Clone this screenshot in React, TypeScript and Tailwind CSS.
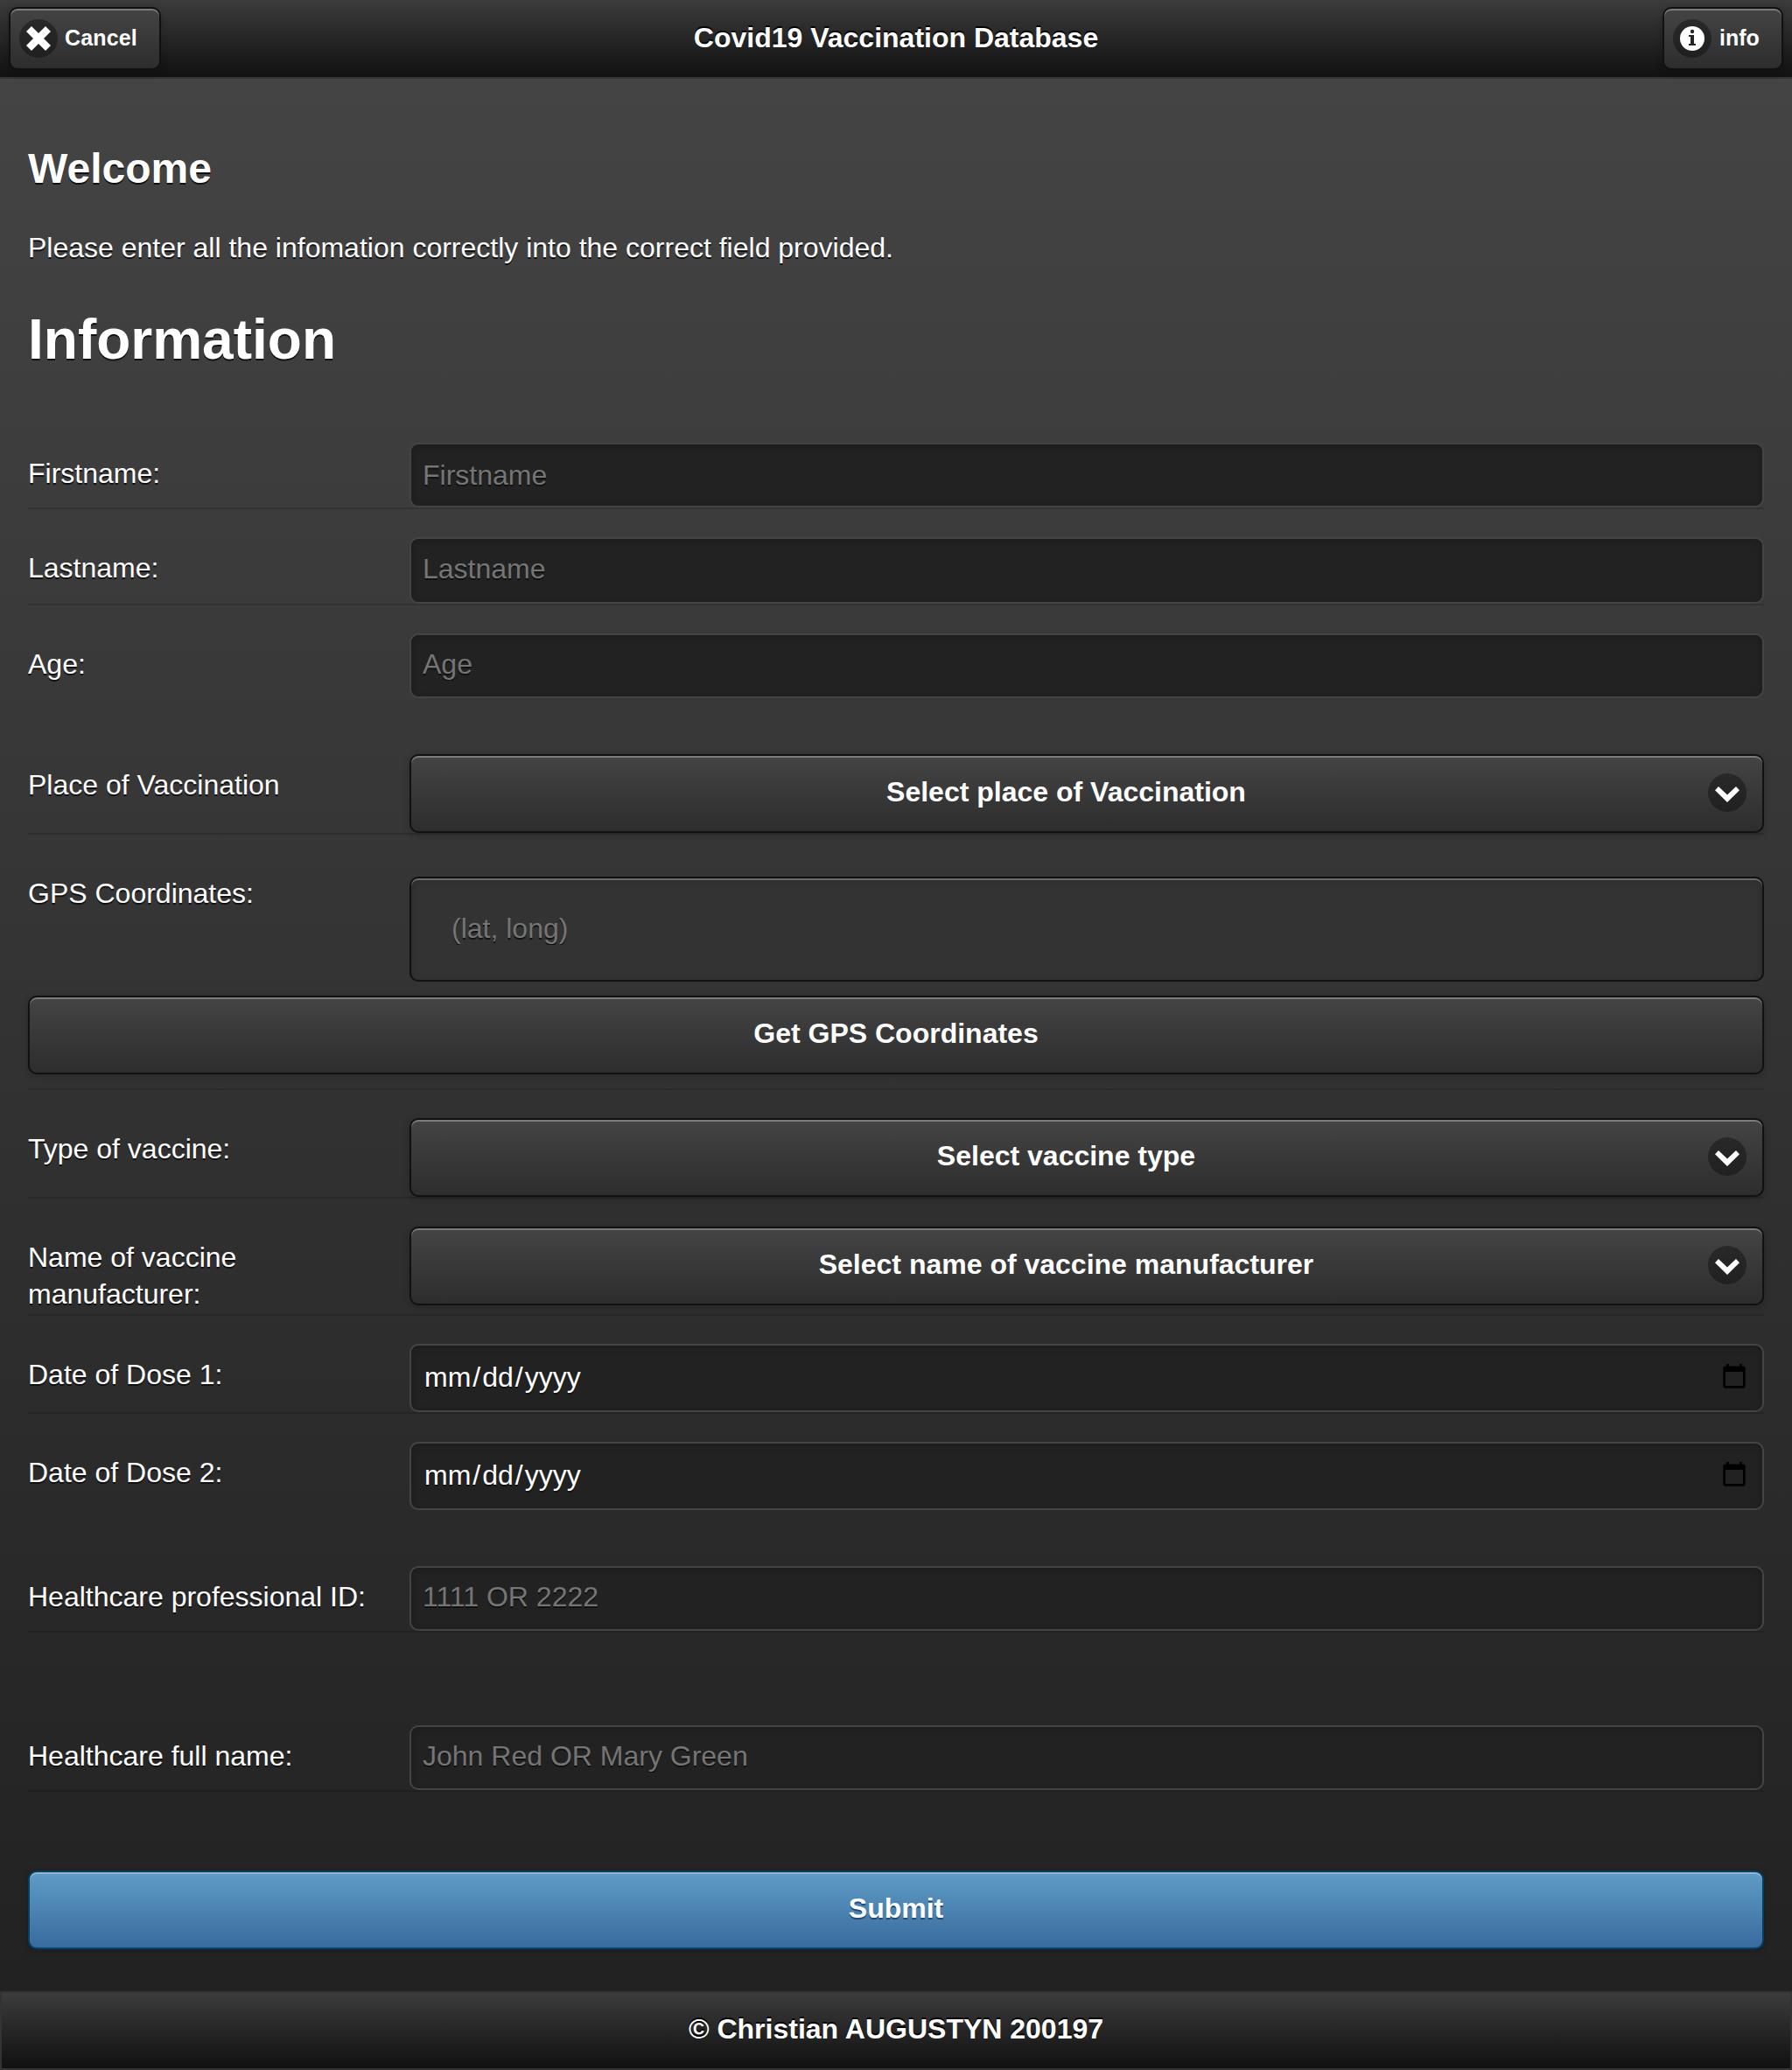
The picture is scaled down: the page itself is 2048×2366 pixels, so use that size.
import type { ReactNode } from "react";

const shell =
  "flex w-full rounded-[10px] border-2 border-[#111] bg-linear-to-b from-[#444] to-[#2d2d2d] shadow-[inset_0_2px_0_rgba(255,255,255,0.3),0_2px_8px_rgba(0,0,0,0.2)]";

function IconDisc({ children }: { children: ReactNode }) {
  return (
    <span className="flex size-[44px] shrink-0 items-center justify-center rounded-full bg-black/35">
      {children}
    </span>
  );
}

function Field({ label, className, control }: { label: string; className: string; control: ReactNode }) {
  return (
    <div className={"flex items-start " + className}>
      <label className="w-[436px] shrink-0 pr-5 pt-[14px] leading-[42px]">{label}</label>
      <div className="min-w-0 flex-1">{control}</div>
    </div>
  );
}

function TextBox({ hint, className }: { hint: string; className: string }) {
  return (
    <input
      placeholder={hint}
      className={
        "block w-full rounded-[10px] border-2 border-[#444] bg-[#222] px-[13px] shadow-[inset_0_2px_8px_rgba(0,0,0,0.2)] outline-none [text-shadow:0_2px_0_#111] placeholder:text-[#757575] " +
        className
      }
    />
  );
}

function DateBox() {
  return (
    <div className="flex h-[78px] w-full items-center justify-between rounded-[10px] border-2 border-[#444] bg-[#222] pl-[15px] pr-[19px] shadow-[inset_0_2px_8px_rgba(0,0,0,0.2)]">
      <span className="pb-[2px] leading-[37px]">
        mm<span className="px-[2px]">/</span>dd<span className="px-[2px]">/</span>yyyy
      </span>
      <svg width="26" height="28" viewBox="0 0 26 28" className="mt-[-4px]">
        <path
          fillRule="evenodd"
          d="M4 0h3v2.500h12V0h3v2.500h1.500a2.200 2.200 0 0 1 2.200 2.200v20.800a2.200 2.200 0 0 1-2.200 2.200h-21A2.200 2.200 0 0 1 .3 25.500V4.700a2.200 2.200 0 0 1 2.200-2.200H4zM3 9v16h20V9z"
          fill="#000"
        />
      </svg>
    </div>
  );
}

function SelectBox({ text }: { text: string }) {
  return (
    <button className={shell + " h-[90px] items-start pr-[18px] pl-[15px] font-bold"}>
      <span className="flex-1 pt-[20px] leading-[42px]">{text}</span>
      <span className="pt-[20px]">
        <IconDisc>
          <svg width="28" height="18" viewBox="0 0 28 18" className="mt-[4px]">
            <path d="M4 0L14 9.500L24 0L28 4.200L14 18L0 4.200z" fill="#fff" />
          </svg>
        </IconDisc>
      </span>
    </button>
  );
}

const line = "border-b-2 border-black/15";

export default function App() {
  return (
    <div className="h-[2366px] w-full bg-[#222] font-['Liberation_Sans',Arial,sans-serif] text-[32px] text-white [text-shadow:0_2px_0_#111]">
      <header className="flex h-[90px] items-start justify-between border-b-2 border-[#333] bg-linear-to-b from-[#3c3c3c] to-[#111] px-[10px] pt-2">
        <div className="flex flex-1">
          <button className="flex h-[72px] w-[174px] items-start rounded-[10px] border-2 border-[#111] bg-linear-to-b from-[#444] to-[#2d2d2d] pt-3 pl-[10px] text-[25px] font-bold shadow-[inset_0_2px_0_rgba(255,255,255,0.3),0_2px_8px_rgba(0,0,0,0.2)]">
            <IconDisc>
              <svg width="28" height="28" viewBox="0 0 28 28">
                <path d="M6 0L14 8L22 0L28 6L20 14L28 22L22 28L14 20L6 28L0 22L8 14L0 6z" fill="#fff" />
              </svg>
            </IconDisc>
            <span className="pt-[5px] pl-[8px] leading-[32px] tracking-[0.15px]">Cancel</span>
          </button>
        </div>
        <h1 className="pt-[14px] leading-[42px] font-bold [text-shadow:0_-2px_0_#000]">Covid19 Vaccination Database</h1>
        <div className="flex flex-1 justify-end">
          <button className="flex h-[72px] w-[138px] items-start rounded-[10px] border-2 border-[#111] bg-linear-to-b from-[#444] to-[#2d2d2d] pt-3 pl-[10px] text-[25px] font-bold shadow-[inset_0_2px_0_rgba(255,255,255,0.3),0_2px_8px_rgba(0,0,0,0.2)]">
            <IconDisc>
              <svg width="28" height="28" viewBox="0 0 28 28">
                <circle cx="14" cy="14" r="14" fill="#fff" />
                <circle cx="14" cy="6" r="2.200" fill="#262626" />
                <path d="M10 10h6v10h2v2h-8v-2h2v-8h-2z" fill="#262626" />
              </svg>
            </IconDisc>
            <span className="pt-[5px] pl-[9px] leading-[32px]">info</span>
          </button>
        </div>
      </header>

      <main className="h-[2186px] bg-linear-to-b from-[#444] to-[#222] px-8 pt-[72px]">
        <h2 className="text-[48px] leading-[62px] font-bold">Welcome</h2>
        <p className="mt-[38px] leading-[42px]">Please enter all the infomation correctly into the correct field provided.</p>
        <h2 className="mt-[43px] text-[64px] leading-[83px] font-bold">Information</h2>

        <form className="mt-[76px]">
          <Field label="Firstname:" className={"h-[76px] " + line} control={<TextBox hint="Firstname" className="h-[74px]" />} />
          <Field label="Lastname:" className={"mt-8 h-[78px] " + line} control={<TextBox hint="Lastname" className="h-[76px] pb-[3px]" />} />
          <Field label="Age:" className="mt-8 h-[74px]" control={<TextBox hint="Age" className="h-[74px] pb-[4px]" />} />
          <Field label="Place of Vaccination" className={"mt-[64px] h-[92px] " + line} control={<SelectBox text="Select place of Vaccination" />} />
          <div className={"mt-[48px] h-[244px] " + line}>
            <div className="flex h-[120px] items-start">
              <label className="mt-[-2px] w-[436px] shrink-0 leading-[42px]">GPS Coordinates:</label>
              <input
                placeholder="(lat, long)"
                className="h-[120px] min-w-0 flex-1 rounded-[10px] border-2 border-[#111] bg-[#333] px-[46px] pb-[1px] shadow-[inset_0_2px_0_rgba(255,255,255,0.3),inset_0_2px_8px_rgba(0,0,0,0.2)] outline-none [text-shadow:0_2px_0_#111] placeholder:text-[#757575]"
              />
            </div>
            <button className={shell + " mt-4 h-[90px] justify-center pt-[20px] leading-[42px] font-bold"}>Get GPS Coordinates</button>
          </div>
          <Field label="Type of vaccine:" className={"mt-8 h-[92px] " + line} control={<SelectBox text="Select vaccine type" />} />
          <Field label="Name of vaccine manufacturer:" className={"mt-8 h-[102px] " + line} control={<SelectBox text="Select name of vaccine manufacturer" />} />
          <Field label="Date of Dose 1:" className={"mt-8 h-[80px] " + line} control={<DateBox />} />
          <Field label="Date of Dose 2:" className="mt-8 h-[78px]" control={<DateBox />} />
          <Field label="Healthcare professional ID:" className={"mt-[64px] h-[76px] " + line} control={<TextBox hint="1111 OR 2222" className="h-[74px] pb-[4px]" />} />
          <Field label="Healthcare full name:" className={"mt-[106px] h-[76px] " + line} control={<TextBox hint="John Red OR Mary Green" className="h-[74px] pb-[4px]" />} />
          <button className="mt-[90px] flex h-[90px] w-full justify-center rounded-[10px] border-2 border-[#044062] bg-linear-to-b from-[#5f9cc5] to-[#396b9e] pt-[20px] leading-[42px] font-bold shadow-[inset_0_2px_0_rgba(255,255,255,0.3),0_2px_8px_rgba(0,0,0,0.2)] [text-shadow:0_2px_0_#194b7e]">
            Submit
          </button>
        </form>
      </main>

      <footer className="flex h-[90px] justify-center border-2 border-[#333] bg-linear-to-b from-[#3c3c3c] to-[#111] pt-[20px] leading-[42px] font-bold [text-shadow:0_-2px_0_#000]">
        © Christian AUGUSTYN 200197
      </footer>
    </div>
  );
}
